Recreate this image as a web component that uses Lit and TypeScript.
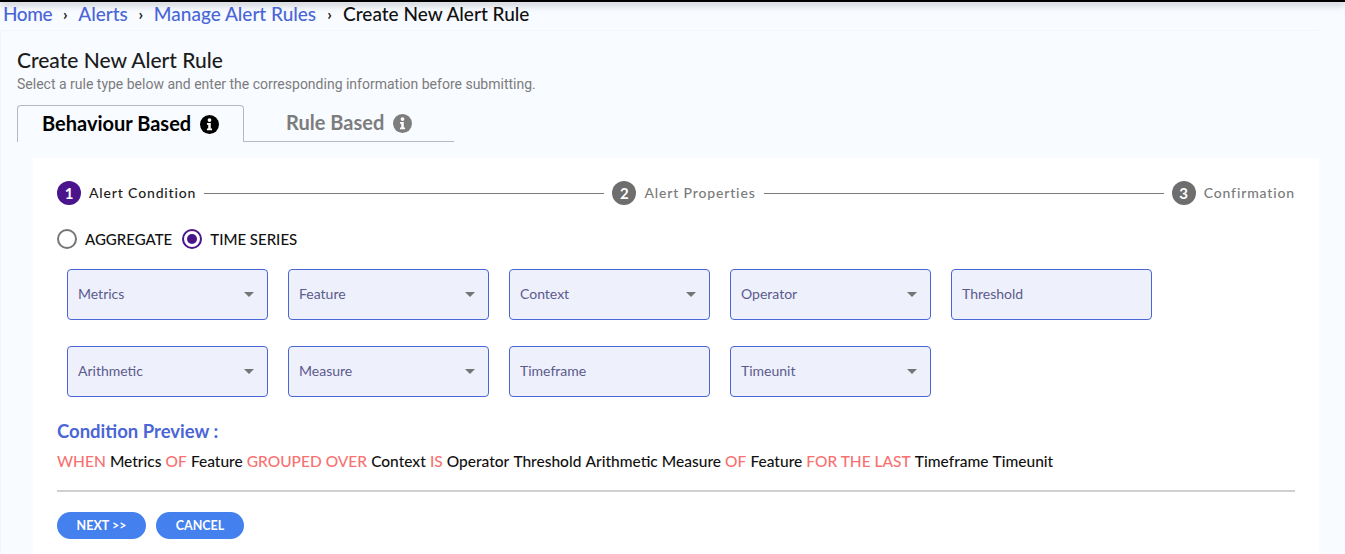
import { LitElement, html, css } from "lit";
import { customElement } from "lit/decorators.js";

const row1 = [
  { label: "Metrics", select: true },
  { label: "Feature", select: true },
  { label: "Context", select: true },
  { label: "Operator", select: true },
  { label: "Threshold", select: false },
];
const row2 = [
  { label: "Arithmetic", select: true },
  { label: "Measure", select: true },
  { label: "Timeframe", select: false },
  { label: "Timeunit", select: true },
];

const preview: [string, boolean][] = [
  ["WHEN", true], ["Metrics", false], ["OF", true], ["Feature", false],
  ["GROUPED OVER", true], ["Context", false], ["IS", true], ["Operator", false],
  ["Threshold", false], ["Arithmetic", false], ["Measure", false], ["OF", true],
  ["Feature", false], ["FOR THE LAST", true], ["Timeframe", false], ["Timeunit", false],
];

@customElement("app-root")
export class AppRoot extends LitElement {
  static styles = css`
    :host {
      display: block;
      height: 554px;
      overflow: hidden;
      background: #f8fbff;
      font-family: Lato, "Open Sans", sans-serif;
      color: #111;
    }
    .topbar {
      height: 2px;
      background: #000;
      box-shadow: 0 2px 7px rgba(0, 0, 0, 0.5);
    }
    .crumbs {
      display: flex;
      align-items: center;
      height: 24px;
      padding: 0 0 2px 3px;
      box-sizing: border-box;
      font-size: 19px;
      font-weight: 500;
    }
    .crumbs a { color: #4a66d6; }
    .crumbs .home { letter-spacing: -0.4px; }
    .crumbs .sep { width: 26px; text-align: center; font-size: 16px; font-weight: 700; color: #222; }
    .crumbs .sep.last { width: 27px; }
    .page {
      margin: 4px 0 0 0;
      width: 1319px;
      height: 524px;
      box-sizing: border-box;
      padding: 18px 0 0 16px;
      background: #f8fbff;
      border-top: 1px solid #f2f5f9;
      border-left: 1px solid #f2f5f9;
      border-radius: 4px 0 0 0;
    }
    h1 { margin: 0; font-size: 21px; line-height: 22px; font-weight: 500; color: #1c1c1c; }
    .sub {
      margin-top: 4px;
      font-family: Roboto, sans-serif;
      font-size: 14px;
      line-height: 18px;
      color: #7c7c7c;
    }
    .tabs { display: flex; margin-top: 12px; height: 37px; }
    .tab {
      display: flex;
      align-items: center;
      box-sizing: border-box;
      padding-bottom: 2px;
      font-size: 20px;
      font-weight: 700;
    }
    .tab.on {
      width: 227px;
      padding-left: 24px;
      color: #000;
      border: 1px solid #b4b8c0;
      border-bottom: 0;
      border-radius: 4px 4px 0 0;
    }
    .tab.off {
      width: 210px;
      padding-left: 42px;
      color: #7d7d7d;
      border-bottom: 1px solid #b4b8c0;
    }
    .tab svg { margin: 3px 0 0 9px; }
    .panel {
      margin: 16px 0 0 16px;
      height: 400px;
      box-sizing: border-box;
      padding: 23px 24px 0 24px;
      background: #fff;
    }
    .stepper { display: flex; align-items: center; height: 24px; }
    .num {
      width: 24px;
      height: 24px;
      border-radius: 50%;
      background: #6e6e6e;
      color: #fff;
      font-size: 15px;
      font-weight: 700;
      display: flex;
      align-items: center;
      justify-content: center;
      flex: none;
    }
    .num.on { background: #4a148c; }
    .step-label {
      margin-left: 8px;
      padding-bottom: 2px;
      font-size: 14px;
      font-weight: 500;
      letter-spacing: 0.85px;
      color: #7a7a7a;
      white-space: nowrap;
    }
    .step-label.on { color: #1c1c1c; }
    .line { flex: 1; height: 1px; background: #7a7a7a; margin: 0 8px; }
    .radios { display: flex; align-items: center; margin-top: 23px; height: 22px; font-size: 15px; font-weight: 500; }
    .radio {
      width: 20px;
      height: 20px;
      box-sizing: border-box;
      border: 2px solid #757575;
      border-radius: 50%;
      display: flex;
      align-items: center;
      justify-content: center;
      flex: none;
    }
    .radio.on { border-color: #4a148c; margin-left: 10px; }
    .radio.on::after {
      content: "";
      width: 10px;
      height: 10px;
      border-radius: 50%;
      background: #4a148c;
    }
    .radios span { margin-left: 8px; }
    .fields { display: flex; gap: 20px; margin: 19px 0 0 10px; }
    .fields + .fields { margin-top: 26px; }
    .field {
      width: 201px;
      height: 51px;
      box-sizing: border-box;
      display: flex;
      align-items: center;
      justify-content: space-between;
      padding: 0 13px 2px 10px;
      background: #eef0fc;
      border: 1px solid #4a66d6;
      border-radius: 4px;
      font-size: 14px;
      color: #5b5b8c;
    }
    .caret {
      width: 0;
      height: 0;
      margin-top: 2px;
      border-left: 5px solid transparent;
      border-right: 5px solid transparent;
      border-top: 5px solid #757575;
    }
    h2 { margin: 23px 0 0; font-size: 18.5px; line-height: 22px; font-weight: 700; color: #4a66d6; }
    .preview { display: flex; gap: 4.1px; margin-top: 9px; font-size: 15.5px; line-height: 20px; font-weight: 500; color: #111; }
    .kw { color: #f87171; }
    hr { margin: 19px 0 0; border: 0; height: 2px; background: #d0d0d0; }
    .actions { display: flex; gap: 10px; margin-top: 20px; }
    button {
      height: 27px;
      padding: 0 0 1px;
      border: 0;
      border-radius: 14px;
      background: #4480ee;
      color: #fff;
      font: 700 12.5px Lato, sans-serif;
    }
    .next { width: 89px; }
    .cancel { width: 88px; }
  `;

  private info(color: string) {
    return html`<svg width="19" height="19" viewBox="0 0 18 18">
      <circle cx="9" cy="9" r="9" fill=${color}></circle>
      <circle cx="9" cy="4.8" r="1.8" fill="#fff"></circle>
      <path d="M6.6 7.6h3.6v5.2h1.2v1.7H6.6v-1.7h1.2V9.3H6.6z" fill="#fff"></path>
    </svg>`;
  }

  private field(f: { label: string; select: boolean }) {
    return html`<div class="field">
      <span>${f.label}</span>${f.select ? html`<i class="caret"></i>` : ""}
    </div>`;
  }

  render() {
    return html`
      <div class="topbar"></div>
      <nav class="crumbs">
        <a class="home">Home</a><span class="sep">›</span>
        <a>Alerts</a><span class="sep">›</span>
        <a>Manage Alert Rules</a><span class="sep last">›</span>
        <span>Create New Alert Rule</span>
      </nav>
      <main class="page">
        <h1>Create New Alert Rule</h1>
        <div class="sub">Select a rule type below and enter the corresponding information before submitting.</div>
        <div class="tabs">
          <div class="tab on">Behaviour Based ${this.info("#000")}</div>
          <div class="tab off">Rule Based ${this.info("#7d7d7d")}</div>
        </div>
        <section class="panel">
          <div class="stepper">
            <div class="num on">1</div><div class="step-label on">Alert Condition</div>
            <div class="line"></div>
            <div class="num">2</div><div class="step-label">Alert Properties</div>
            <div class="line"></div>
            <div class="num">3</div><div class="step-label">Confirmation</div>
          </div>
          <div class="radios">
            <div class="radio"></div><span>AGGREGATE</span>
            <div class="radio on"></div><span>TIME SERIES</span>
          </div>
          <div class="fields">${row1.map((f) => this.field(f))}</div>
          <div class="fields">${row2.map((f) => this.field(f))}</div>
          <h2>Condition Preview :</h2>
          <div class="preview">
            ${preview.map(([t, kw]) => html`<span class=${kw ? "kw" : ""}>${t}</span>`)}
          </div>
          <hr />
          <div class="actions">
            <button class="next">NEXT &gt;&gt;</button>
            <button class="cancel">CANCEL</button>
          </div>
        </section>
      </main>
    `;
  }
}
